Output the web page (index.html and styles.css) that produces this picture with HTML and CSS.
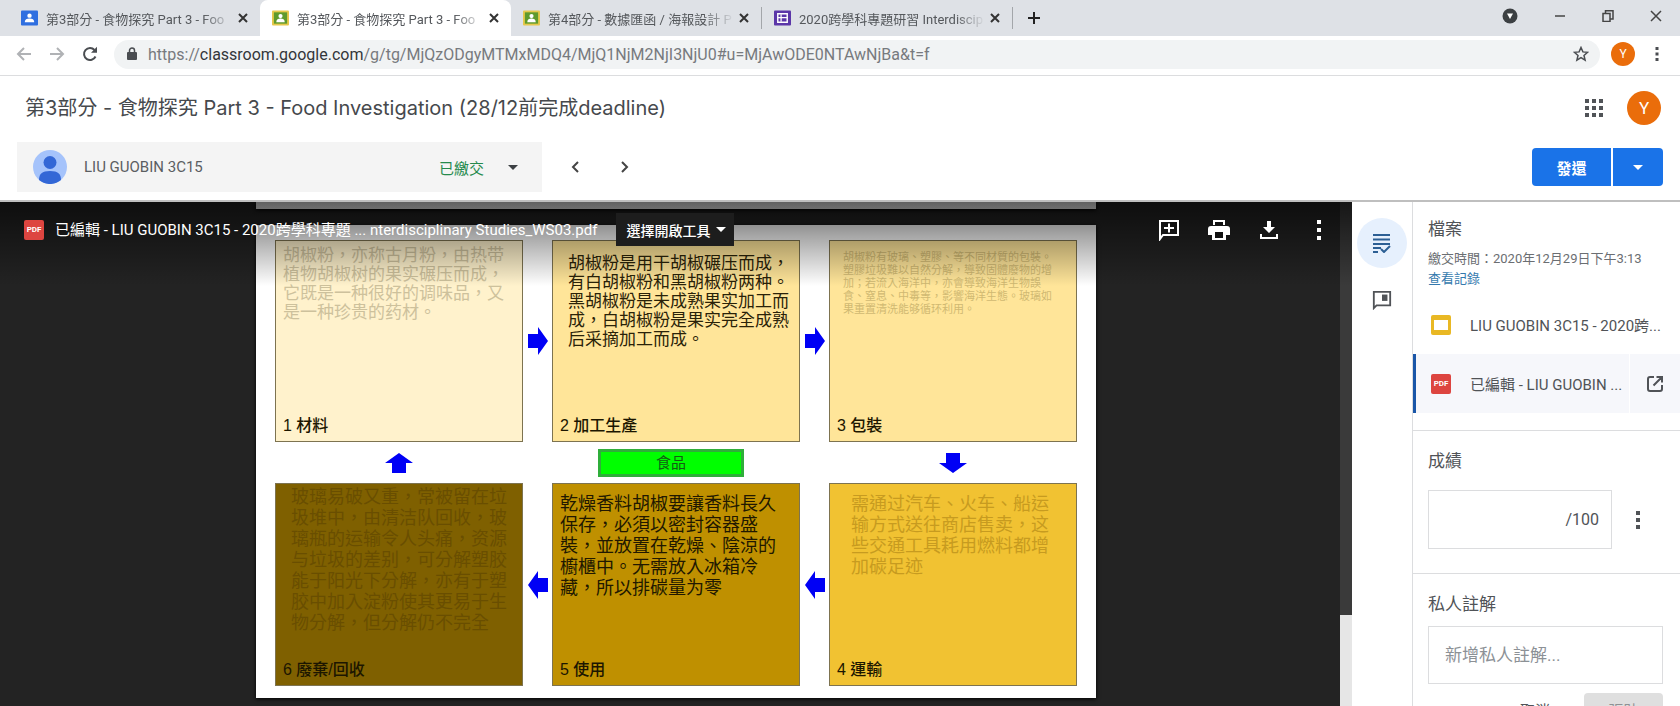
FILE: index.html
```html
<!DOCTYPE html>
<html lang="zh-Hant">
<head>
  <meta charset="UTF-8" />
  <meta name="viewport" content="width=device-width, initial-scale=1.0"/>
  <title>第3部分 - 食物探究 Part 3 - Food Investigation</title>
  <link rel="stylesheet" href="styles.css">
</head>
<body>
  <!-- Browser tabs -->
  <div class="tab-strip">
    <div class="tab">
      <svg class="favicon" viewBox="0 0 18 16"><rect width="18" height="16" rx="1" fill="#2f6fe0"/><circle cx="9" cy="5.500" r="2.300" fill="#fff"/><path d="M4 12.500c0-3 2-4 5-4s5 1 5 4z" fill="#fff"/></svg>
      <span class="tab-title">第3部分 - 食物探究 Part 3 - Foo</span>
      <button class="tab-close" aria-label="關閉"><svg viewBox="0 0 10 10"><path d="M1 1l8 8M9 1l-8 8"/></svg></button>
    </div>
    <div class="tab active">
      <svg class="favicon" viewBox="0 0 18 16"><rect width="18" height="16" rx="1" fill="#e6c84b"/><rect x="2" y="2" width="14" height="12" fill="#5f9a2c"/><circle cx="9" cy="6" r="2.200" fill="#fff"/><path d="M4.500 12.500c0-3 2-4 4.500-4s4.500 1 4.500 4z" fill="#fff"/></svg>
      <span class="tab-title">第3部分 - 食物探究 Part 3 - Foo</span>
      <button class="tab-close" aria-label="關閉"><svg viewBox="0 0 10 10"><path d="M1 1l8 8M9 1l-8 8"/></svg></button>
    </div>
    <div class="tab ruled">
      <svg class="favicon" viewBox="0 0 18 16"><rect width="18" height="16" rx="1" fill="#e6c84b"/><rect x="2" y="2" width="14" height="12" fill="#5f9a2c"/><circle cx="9" cy="6" r="2.200" fill="#fff"/><path d="M4.500 12.500c0-3 2-4 4.500-4s4.500 1 4.500 4z" fill="#fff"/></svg>
      <span class="tab-title">第4部分 - 數據匯函 / 海報設計 P</span>
      <button class="tab-close" aria-label="關閉"><svg viewBox="0 0 10 10"><path d="M1 1l8 8M9 1l-8 8"/></svg></button>
    </div>
    <div class="tab ruled">
      <svg class="favicon" viewBox="0 0 18 16"><rect width="18" height="16" rx="1" fill="#5b36a8"/><path d="M4 3.500h10v9H4z" fill="none" stroke="#fff" stroke-width="1.500"/><path d="M4 7.500h10M7.500 4v8" stroke="#fff" stroke-width="1.300"/></svg>
      <span class="tab-title">2020跨學科專題研習 Interdiscip</span>
      <button class="tab-close" aria-label="關閉"><svg viewBox="0 0 10 10"><path d="M1 1l8 8M9 1l-8 8"/></svg></button>
    </div>
    <button class="new-tab" aria-label="新分頁"><svg viewBox="0 0 14 14"><path d="M7 1v12M1 7h12"/></svg></button>
    <div class="window-controls">
      <svg width="16" height="16" viewBox="0 0 16 16"><circle cx="8" cy="8" r="7.500" fill="#3c4043"/><path d="M5 5.500h6L8 11z" fill="#fff"/></svg>
      <button aria-label="最小化"><svg width="12" height="12" viewBox="0 0 12 12"><path d="M1 6h10"/></svg></button>
      <button aria-label="還原"><svg width="12" height="12" viewBox="0 0 12 12"><path d="M1 3.500h7v8H1zM3.500 3V.8H11V9H8.500"/></svg></button>
      <button aria-label="關閉視窗"><svg width="12" height="12" viewBox="0 0 12 12"><path d="M1 1l10 10M11 1L1 11"/></svg></button>
    </div>
  </div>

  <!-- Address bar -->
  <div class="toolbar">
    <button class="tool faded" aria-label="返回"><svg viewBox="0 0 16 16"><path d="M15 8H2M8 2L2 8l6 6"/></svg></button>
    <button class="tool faded" aria-label="前進"><svg viewBox="0 0 16 16"><path d="M1 8h13M8 2l6 6-6 6"/></svg></button>
    <button class="tool" aria-label="重新載入"><svg viewBox="0 0 16 16"><path d="M13.500 10.500A6 6 0 1 1 12.500 4" stroke-width="2"/><path d="M15 .8v6H9z" fill="#4a4d51" stroke="none"/></svg></button>
    <div class="omnibox">
      <svg class="lock" viewBox="0 0 10 14"><rect y="5" width="10" height="8" rx="1" fill="#4a4d51"/><path d="M2.500 6V3.500a2.500 2.500 0 0 1 5 0V6" fill="none" stroke="#4a4d51" stroke-width="1.500"/></svg>
      <span class="url">https://<b>classroom.google.com</b>/g/tg/MjQzODgyMTMxMDQ4/MjQ1NjM2NjI3NjU0#u=MjAwODE0NTAwNjBa&amp;t=f</span>
      <svg class="star" viewBox="0 0 16 16"><path d="M8 1.500l1.900 4.400 4.700.4-3.600 3.100 1.100 4.700L8 11.600l-4.100 2.500L5 9.400 1.400 6.300l4.700-.4z" fill="none" stroke="#4a4d51" stroke-width="1.500"/></svg>
    </div>
    <span class="avatar small">Y</span>
    <button class="tool menu" aria-label="選單"><svg viewBox="0 0 4 16"><path d="M.5 1h3v3h-3zM.5 6.500h3v3h-3zM.5 12h3v3h-3z" fill="#4a4d51" stroke="none"/></svg></button>
  </div>

  <!-- Classroom header -->
  <header>
    <div class="header-row">
      <h1>第3部分 - 食物探究 Part 3 - Food Investigation (28/12前完成deadline)</h1>
      <button class="icon-btn" aria-label="Google 應用程式"><svg width="18" height="18" viewBox="0 0 18 18"><path d="M0 0h4v4H0zM7 0h4v4H7zM14 0h4v4h-4zM0 7h4v4H0zM7 7h4v4H7zM14 7h4v4h-4zM0 14h4v4H0zM7 14h4v4H7zM14 14h4v4h-4z" fill="#505357"/></svg></button>
      <span class="avatar">Y</span>
    </div>
    <div class="header-row">
      <button class="student">
        <svg class="person" viewBox="0 0 34 34"><circle cx="17" cy="17" r="17" fill="#a5c3fb"/><circle cx="17" cy="12.500" r="6.500" fill="#3367d6"/><path d="M6 30c0-6 3-9 11-9s11 3 11 9a17 17 0 0 1-22 0z" fill="#3367d6"/></svg>
        <span class="name">LIU GUOBIN 3C15</span>
        <span class="status">已繳交</span>
        <span class="caret"></span>
      </button>
      <button class="step" aria-label="上一位"><svg viewBox="0 0 8 12"><path d="M7 1L2 6l5 5"/></svg></button>
      <button class="step" aria-label="下一位"><svg viewBox="0 0 8 12"><path d="M1 1l5 5-5 5"/></svg></button>
      <div class="return-group">
        <button class="return">發還</button>
        <button class="return-more" aria-label="更多發還選項"><span class="caret"></span></button>
      </div>
    </div>
  </header>

  <main>
    <!-- PDF viewer -->
    <section class="viewer">
      <div class="sheet previous"></div>
      <div class="sheet">
        <div class="cycle">
          <article class="card material"><p>胡椒粉，亦称古月粉，由热带<br>植物胡椒树的果实碾压而成，<br>它既是一种很好的调味品，又<br>是一种珍贵的药材。</p><h2>1 材料</h2></article>
          <svg class="arrow" viewBox="0 0 20 28"><path d="M0 7h10V0l10 14-10 14v-7H0z"/></svg>
          <article class="card process"><p>胡椒粉是用干胡椒碾压而成，<br>有白胡椒粉和黑胡椒粉两种。<br>黑胡椒粉是未成熟果实加工而<br>成，白胡椒粉是果实完全成熟<br>后采摘加工而成。</p><h2>2 加工生產</h2></article>
          <svg class="arrow" viewBox="0 0 20 28"><path d="M0 7h10V0l10 14-10 14v-7H0z"/></svg>
          <article class="card packing"><p>胡椒粉有玻璃、塑膠、等不同材質的包裝。<br>塑膠垃圾難以自然分解，導致固體廢物的增<br>加；若流入海洋中，亦會導致海洋生物誤<br>食、窒息、中毒等，影響海洋生態。玻璃如<br>果重置清洗能够循环利用。</p><h2>3 包裝</h2></article>

          <svg class="arrow tall" viewBox="0 0 28 20"><path d="M7 20V10H0L14 0l14 10h-7v10z"/></svg>
          <div class="topic">食品</div>
          <svg class="arrow tall last" viewBox="0 0 28 20"><path d="M7 0v10H0l14 10 14-10h-7V0z"/></svg>

          <article class="card waste"><p>玻璃易破又重，常被留在垃<br>圾堆中，由清洁队回收，玻<br>璃瓶的运输令人头痛，资源<br>与垃圾的差别，可分解塑胶<br>能于阳光下分解，亦有于塑<br>胶中加入淀粉使其更易于生<br>物分解，但分解仍不完全</p><h2>6 廢棄/回收</h2></article>
          <svg class="arrow" viewBox="0 0 20 28"><path d="M20 7H10V0L0 14l10 14v-7h10z"/></svg>
          <article class="card usage"><p>乾燥香料胡椒要讓香料長久<br>保存，必須以密封容器盛<br>裝，並放置在乾燥、陰涼的<br>櫥櫃中。无需放入冰箱冷<br>藏，所以排碳量为零</p><h2>5 使用</h2></article>
          <svg class="arrow" viewBox="0 0 20 28"><path d="M20 7H10V0L0 14l10 14v-7h10z"/></svg>
          <article class="card transport"><p>需通过汽车、火车、船运<br>输方式送往商店售卖，这<br>些交通工具耗用燃料都增<br>加碳足迹</p><h2>4 運輸</h2></article>
        </div>
      </div>

      <div class="scrollbar"><div class="thumb"></div></div>

      <div class="viewer-bar">
        <span class="pdf">PDF</span>
        <span class="file-name">已編輯 - LIU GUOBIN 3C15 - 2020跨學科專題 ... nterdisciplinary Studies_WS03.pdf</span>
        <button class="open-with">選擇開啟工具 <span class="caret"></span></button>
        <div class="viewer-tools">
          <button aria-label="新增註解"><svg viewBox="0 0 22 22"><path d="M2 20V2h18v14H5z" fill="none" stroke="#fff" stroke-width="2"/><path d="M11 4.500v9M6 9h10" stroke="#fff" stroke-width="2"/></svg></button>
          <button aria-label="列印"><svg viewBox="0 0 22 22"><path d="M5 1h12v5H5zM3 7h16a3 3 0 0 1 3 3v6h-4v5H4v-5H0v-6a3 3 0 0 1 3-3z" fill="#fff"/><path d="M7 13h8v6H7zM7 3h8v3H7z" fill="#111"/></svg></button>
          <button aria-label="下載"><svg viewBox="0 0 22 22"><path d="M9 2h4v6h4l-6 6-6-6h4z" fill="#fff"/><path d="M3 15v4h16v-4" fill="none" stroke="#fff" stroke-width="2"/></svg></button>
          <button aria-label="更多動作"><svg viewBox="0 0 22 22"><path d="M9 1h4v4H9zM9 9h4v4H9zM9 17h4v4H9z" fill="#fff"/></svg></button>
        </div>
      </div>
    </section>

    <nav class="rail">
      <button class="rail-btn on" aria-label="評分"><svg viewBox="0 0 20 20"><path d="M1 2h17M1 6.500h17M1 11h17M1 15h8M1 19h5" stroke="#2c5f94" stroke-width="2"/><path d="M9 16l3 3 6-6" fill="none" stroke="#2c5f94" stroke-width="2"/></svg></button>
      <button class="rail-btn" aria-label="註解庫"><svg viewBox="0 0 22 22"><path d="M2 20V2h18v15H5z" fill="none" stroke="#505357" stroke-width="2"/><path d="M11 5h6v7h-6z" fill="#505357"/></svg></button>
    </nav>

    <aside>
      <section class="files">
        <h3>檔案</h3>
        <p class="turned-in">繳交時間：2020年12月29日下午3:13</p>
        <a class="history" href="#">查看記錄</a>
        <div class="file">
          <svg class="file-icon" viewBox="0 0 20 20"><rect width="20" height="20" rx="2" fill="#e9b824"/><rect x="3" y="5" width="14" height="10" fill="#fff"/></svg>
          <a href="#">LIU GUOBIN 3C15 - 2020跨...</a>
        </div>
        <div class="file selected">
          <span class="pdf">PDF</span>
          <a href="#">已編輯 - LIU GUOBIN ...</a>
          <button class="open" aria-label="在新視窗開啟"><svg viewBox="0 0 18 18"><path d="M8 2H4a2 2 0 0 0-2 2v10a2 2 0 0 0 2 2h10a2 2 0 0 0 2-2v-4M10.500 2H16v5.500M16 2l-8.500 8.500" fill="none" stroke="#505357" stroke-width="2"/></svg></button>
        </div>
      </section>
      <section class="grade">
        <h3><label for="grade">成績</label></h3>
        <div class="grade-row">
          <div class="grade-box"><input id="grade" type="text"><span>/100</span></div>
          <button aria-label="成績選項"><svg viewBox="0 0 4 18"><path d="M0 0h4v4H0zM0 7h4v4H0zM0 14h4v4H0z" fill="#505357"/></svg></button>
        </div>
      </section>
      <section class="comments">
        <h3><label for="comment">私人註解</label></h3>
        <input id="comment" type="text" placeholder="新增私人註解...">
        <div class="comment-actions">
          <button>取消</button>
          <button class="post" disabled>張貼</button>
        </div>
      </section>
    </aside>
  </main>
</body>
</html>
```
FILE: styles.css
```css
:root {
  --line: #dcdddf;
  --blue: #1a73e8;
  --orange: #ea6d0b;
}
* { margin: 0; padding: 0; box-sizing: border-box; }
body { font-family: Roboto, "Noto Sans CJK TC", sans-serif; font-size: 15px; color: #3c4043; background: #fff; height: 100vh; display: flex; flex-direction: column; overflow: hidden; }
button { font: inherit; color: inherit; background: none; border: none; cursor: pointer; display: flex; align-items: center; justify-content: center; }
svg { display: block; flex: none; }
.caret { width: 0; height: 0; border: 5px solid transparent; border-top-color: currentColor; border-bottom: none; }

/* Tabs */
.tab-strip { height: 36px; flex: none; background: #dee1e6; display: flex; padding-left: 9px; }
.tab { width: 251px; min-width: 0; display: flex; align-items: center; padding: 0 12px; position: relative; }
.tab.active { background: #fff; border-radius: 8px 8px 0 0; }
.tab.ruled { border-right: 1px solid #a3a6aa; border-image: linear-gradient(transparent 22%, #a3a6aa 22%, #a3a6aa 80%, transparent 80%) 1; }
.favicon { width: 17px; height: 16px; }
.tab-title { flex: 1; margin: 0 5px 0 8px; font-size: 13px; color: #55585c; white-space: nowrap; mask-image: linear-gradient(to right, #000 84%, transparent); }
.tab-close svg { width: 10px; height: 10px; stroke: #333; stroke-width: 2; }
.new-tab { width: 42px; }
.new-tab svg { width: 14px; height: 14px; stroke: #222; stroke-width: 2; }
.window-controls { margin-left: auto; display: flex; align-items: center; gap: 36px; padding: 0 18px 4px 0; }
.window-controls button svg { fill: none; stroke: #444; stroke-width: 1.5px; }

/* Address bar */
.toolbar { height: 40px; flex: none; display: flex; align-items: center; padding: 0 21px 3px 15px; border-bottom: 1px solid var(--line); }
.tool { width: 18px; margin-right: 15px; }
.tool svg { width: 16px; height: 16px; fill: none; stroke: #4a4d51; stroke-width: 2; }
.tool.faded svg { stroke: #b0b2b5; }
.omnibox { flex: 1; height: 29px; border-radius: 15px; background: #f1f3f4; display: flex; align-items: center; padding: 0 11px 0 13px; }
.lock { width: 10px; height: 14px; }
.url { flex: 1; margin-left: 11px; font-size: 16px; color: #777a7e; white-space: nowrap; }
.url b { font-weight: 400; color: #33363a; }
.star { width: 16px; height: 16px; }
.avatar { width: 34px; height: 34px; border-radius: 50%; background: var(--orange); color: #fff; display: flex; align-items: center; justify-content: center; font-size: 17px; }
.avatar.small { width: 24px; height: 24px; font-size: 12px; margin: 0 20px 0 11px; }
.tool.menu { width: 4px; margin: 0; }
.tool.menu svg { width: 4px; }

/* Header */
header { flex: none; height: 126px; padding: 14px 17px 0; border-bottom: 2px solid #bfbfbf; }
.header-row { display: flex; align-items: center; }
.header-row + .header-row { margin-top: 16px; height: 50px; }
h1 { flex: 1; font-family: Inter, "Noto Sans CJK TC", sans-serif; font-size: 20px; line-height: 36px; font-weight: 400; padding-left: 8px; color: #46494d; }
.icon-btn { margin-right: 24px; }
header .avatar { margin-right: 2px; }
.student { width: 525px; height: 50px; background: #f4f4f4; padding: 0 24px 0 16px; }
.person { width: 34px; height: 34px; }
.name { flex: 1; text-align: left; margin-left: 17px; color: #5b5e62; }
.status { color: #258a4c; margin-right: 24px; }
.step { width: 50px; height: 50px; }
.student + .step { margin-left: 8px; }
.step svg { width: 8px; height: 12px; fill: none; stroke: #444; stroke-width: 2; }
.return-group { margin-left: auto; display: flex; gap: 2px; color: #fff; }
.return { width: 79px; height: 38px; background: var(--blue); border-radius: 4px 0 0 4px; font-weight: 700; }
.return-more { width: 50px; height: 38px; background: var(--blue); border-radius: 0 4px 4px 0; }

/* Viewer */
main { flex: 1; min-height: 0; display: flex; }
.viewer { flex: 1; min-width: 0; position: relative; overflow: hidden; background: #232323; }
.sheet { max-width: 840px; margin: 0 auto; background: #fff; padding: 15px 19px 12px; box-shadow: 0 1px 4px #000; }
.sheet.previous { height: 7px; padding: 0; margin-bottom: 16px; }
.cycle { display: grid; grid-template-columns: minmax(0, 1fr) 29px minmax(0, 1fr) 29px minmax(0, 1fr); grid-template-rows: 202px 41px 203px; align-items: center; justify-items: center; }
.card { width: 100%; height: 100%; border: 1px solid #7d7350; padding: 5px 7px; display: flex; flex-direction: column; justify-content: space-between; font-family: "Liberation Sans", "Noto Sans CJK TC", sans-serif; white-space: nowrap; }
.card p { font-size: 17px; line-height: 19px; }
.card h2 { font-size: 16px; line-height: 20px; font-weight: 500; color: #1c1600; }
.card.material { background: #fff2cc; }
.material p { color: #cdc19c; }
.card.process { background: #ffe599; }
.process p { color: #2a2208; padding: 8px 8px 0; }
.card.packing { background: #ffe599; }
.packing p { color: #d0b972; font-size: 11px; line-height: 13px; padding: 5px 6px 0; }
.usage p, .waste p, .transport p { font-size: 18px; line-height: 21px; }
.card.waste { background: #7f6000; padding-top: 3px; }
.waste p { color: #694e00; padding-left: 8px; }
.card.usage { background: #bf9000; }
.usage p { color: #211800; padding-top: 5px; }
.card.transport { background: #f1c232; }
.transport p { color: #c79b20; padding: 5px 14px 0; }
.arrow { width: 20px; height: 28px; fill: #0000f5; }
.arrow.tall { width: 28px; height: 20px; }
.topic { grid-column: 2 / 5; width: 146px; height: 28px; margin-right: 10px; background: #00ff00; border: 3px solid #2fae3a; color: #145c14; text-align: center; line-height: 22px; }
.scrollbar { position: absolute; top: 0; right: 0; bottom: 0; width: 12px; background: #e6e6e6; }
.thumb { height: 82%; background: #3a3a3a; }
.viewer-bar { position: absolute; top: 0; left: 0; right: 0; height: 84px; padding: 11px 22px 0 24px; display: flex; align-items: flex-start; color: #fff; background: linear-gradient(rgba(0,0,0,.62), rgba(0,0,0,.36) 38%, transparent); }
.pdf { width: 20px; height: 20px; flex: none; border-radius: 2px; background: #dd4540; color: #fff; font-size: 8px; font-weight: 700; line-height: 20px; text-align: center; }
.viewer-bar .pdf { margin-top: 7px; }
.file-name { margin-left: 11px; line-height: 34px; white-space: nowrap; }
.open-with { margin-left: 19px; height: 33px; padding: 0 8px 0 10px; gap: 6px; background: #1d1d1d; font-size: 14px; font-weight: 500; white-space: nowrap; }
.viewer-tools { margin-left: auto; display: flex; gap: 28px; height: 34px; }
.viewer-tools svg { width: 22px; height: 22px; }

/* Side rail and panel */
.rail { width: 60px; flex: none; display: flex; flex-direction: column; align-items: center; gap: 7px; padding-top: 16px; }
.rail-btn { width: 50px; height: 50px; border-radius: 50%; }
.rail-btn.on { background: #e6f0fd; }
.rail-btn svg { width: 20px; height: 20px; }
aside { width: 268px; flex: none; border-left: 1px solid var(--line); overflow: hidden; color: #505357; }
aside section { padding: 0 17px 0 15px; }
aside section + section { border-top: 1px solid var(--line); }
h3 { font-size: 17px; line-height: 24px; font-weight: 400; }
.files { padding: 15px 0 17px; }
.files h3, .turned-in, .history { display: block; margin-left: 15px; }
.turned-in { font-size: 13px; line-height: 20px; margin-top: 8px; white-space: nowrap; color: #6b6e72; }
.history { font-size: 13px; line-height: 20px; color: #3479ad; text-decoration: none; }
.file { height: 59px; margin-top: 6px; padding-left: 18px; padding-right: 18px; display: flex; align-items: center; }
.file-icon { width: 20px; height: 20px; }
.file a { flex: 1; margin-left: 19px; color: inherit; text-decoration: none; white-space: nowrap; }
.file.selected { margin-top: 0; padding: 0 0 0 15px; background: #f6f7fb; border-left: 3px solid #1a56a8; }
.open { width: 51px; height: 59px; border-left: 1px solid #fff; }
.open svg { width: 18px; height: 18px; }
.grade h3 { padding-top: 18px; }
.grade { height: 143px; }
.grade-row { display: flex; align-items: center; gap: 24px; margin-top: 17px; }
.grade-box { width: 184px; height: 59px; border: 1px solid var(--line); display: flex; align-items: center; padding: 0 12px; font-size: 16px; }
.grade-box input { flex: 1; min-width: 0; height: 40px; border: none; outline: none; font: inherit; text-align: right; }
.grade-row svg { width: 4px; height: 18px; }
.comments h3 { padding-top: 18px; }
.comments input { width: 100%; height: 58px; margin-top: 10px; border: 1px solid var(--line); padding: 0 16px; font: inherit; font-size: 17px; }
.comments input::placeholder { color: #8c9196; }
.comment-actions { display: flex; justify-content: flex-end; gap: 34px; margin-top: 9px; }
.comment-actions button { height: 32px; }
.comment-actions .post { width: 79px; background: #dfdfdf; color: #8f9194; border-radius: 4px; }
```
